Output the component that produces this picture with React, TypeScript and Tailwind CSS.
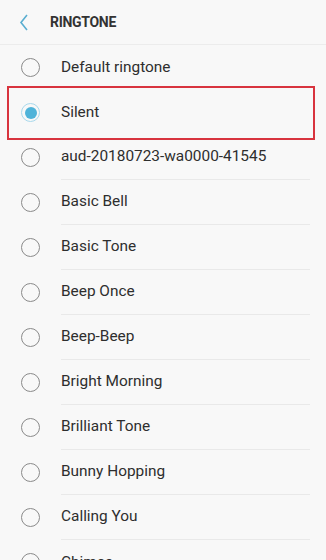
const items: string[] = [
    "Default ringtone",
    "Silent",
    "aud-20180723-wa0000-41545",
    "Basic Bell",
    "Basic Tone",
    "Beep Once",
    "Beep-Beep",
    "Bright Morning",
    "Brilliant Tone",
    "Bunny Hopping",
    "Calling You",
    "Chimes",
];

const Radio = ({ checked }: { checked: boolean }) =>
    checked ? (
        <span className="flex h-[19px] w-[19px] items-center justify-center rounded-full border-[1.5px] border-[#a9d9ec]">
            <span className="block h-[12px] w-[12px] rounded-full bg-[#4fb3d9]" />
        </span>
    ) : (
        <span className="block h-[19px] w-[19px] rounded-full border-[1.5px] border-[#8a8a8a]" />
    );

const App = () => {
    return (
        <div
            className="h-[560px] w-[326px] overflow-hidden bg-[#f8f8f8] text-[#333]"
            style={{ fontFamily: "Roboto, 'Noto Sans', sans-serif" }}
        >
            <div className="flex h-[45px] items-center border-b border-[#ececec]">
                <svg width="10" height="17" viewBox="0 0 10 17" className="ml-[19px]">
                    <path d="M8 1 L2 8.5 L8 16" fill="none" stroke="#5aaed0" strokeWidth="1.6" />
                </svg>
                <span className="ml-[21px] text-[14px] font-bold tracking-[-0.3px] text-[#333]">
                    RINGTONE
                </span>
            </div>

            <div className="flex flex-col">
                {items.map((name, i) => (
                    <div
                        key={name}
                        className={
                            i === 1
                                ? "relative flex h-[45px] items-center"
                                : "flex h-[45px] items-center"
                        }
                    >
                        {i === 1 && (
                            <div className="absolute left-[7px] right-[11px] top-[-4px] bottom-[-5px] border-2 border-[#d8343e]" />
                        )}
                        <div className="flex w-[61px] justify-center">
                            <Radio checked={i === 1} />
                        </div>
                        <div
                            className={
                                i > 1 && i < items.length - 1
                                    ? "mr-[16px] flex h-full flex-1 items-center border-b border-[#e9e9e9]"
                                    : "mr-[16px] flex h-full flex-1 items-center"
                            }
                        >
                            <span className="text-[15.4px] text-[#2e2e2e]">{name}</span>
                        </div>
                    </div>
                ))}
            </div>
        </div>
    );
};

export default App;
